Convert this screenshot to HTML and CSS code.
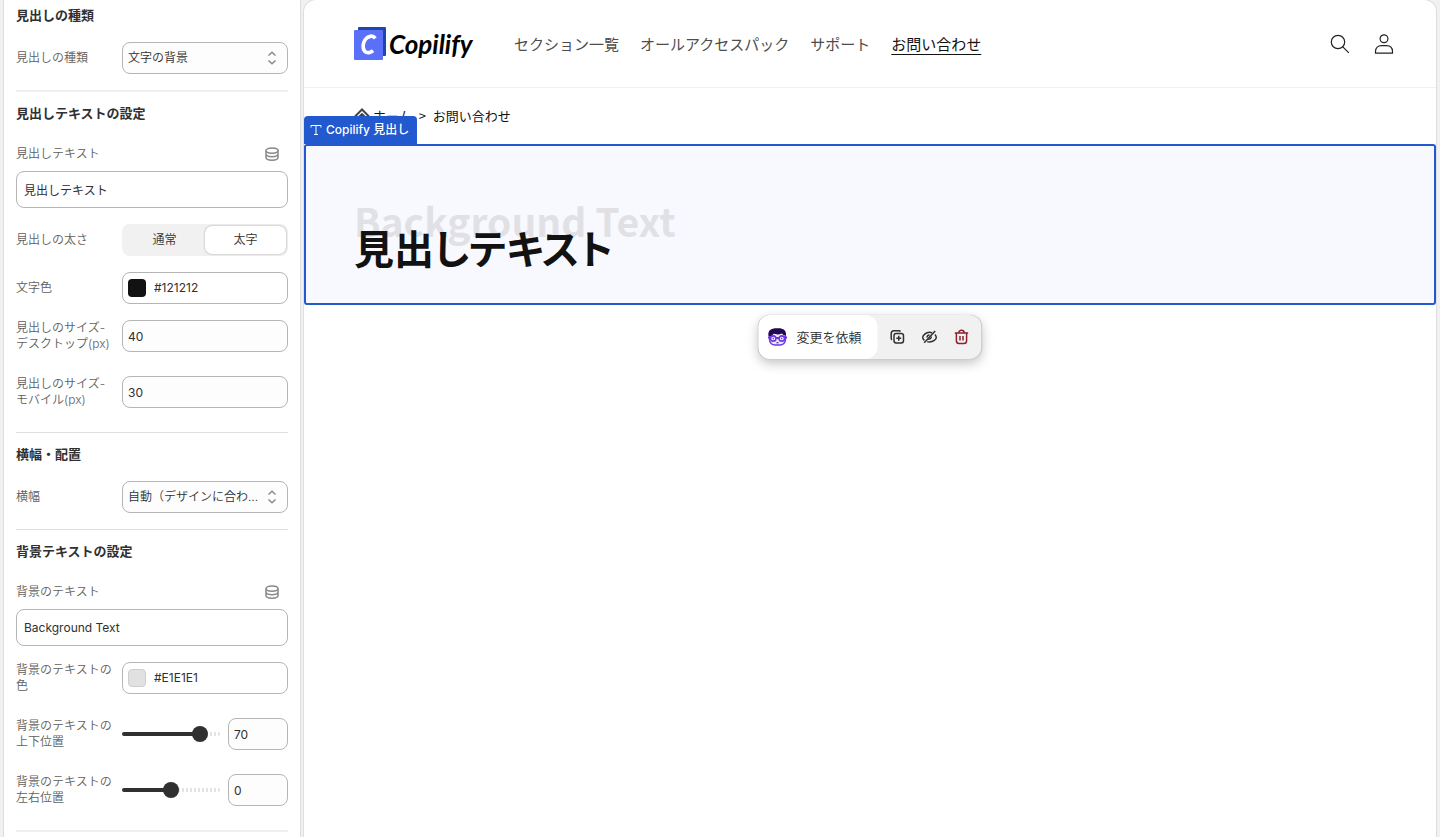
FILE: index.html
```html
<!DOCTYPE html>
<html lang="ja">

<head>
    <meta charset="UTF-8">
    <meta name="viewport" content="width=device-width, initial-scale=1.0">
    <title>Copilify 見出し</title>
    <link rel="stylesheet" href="styles.css">
</head>

<body>

    <aside class="settings">
        <section class="group group-soft">
            <h2>見出しの種類</h2>
            <div class="row">
                <label for="type">見出しの種類</label>
                <div class="select">
                    <select id="type">
                        <option>文字の背景</option>
                    </select>
                    <svg viewBox="0 0 16 16"><path d="M4.500 5.500 8 2.200l3.500 3.300M4.500 10.500 8 13.800l3.500-3.300" /></svg>
                </div>
            </div>
        </section>

        <section class="group">
            <h2>見出しテキストの設定</h2>
            <div class="field">
                <div class="field-head">
                    <label for="heading">見出しテキスト</label>
                    <button type="button" class="source" aria-label="動的ソース">
                        <svg viewBox="0 0 16 16"><ellipse cx="8" cy="4.600" rx="6" ry="2.700" /><path d="M2 4.600v7c0 1.500 2.700 2.700 6 2.700s6-1.200 6-2.700v-7M2 8.100c0 1.500 2.700 2.700 6 2.700s6-1.200 6-2.700" /></svg>
                    </button>
                </div>
                <input class="text" id="heading" type="text" value="見出しテキスト">
            </div>
            <div class="row">
                <span class="name" id="weight">見出しの太さ</span>
                <div class="segment" role="radiogroup" aria-labelledby="weight">
                    <label><input type="radio" name="weight"><span>通常</span></label>
                    <label><input type="radio" name="weight" checked><span>太字</span></label>
                </div>
            </div>
            <div class="row">
                <label for="color">文字色</label>
                <div class="color">
                    <span class="swatch swatch-dark"></span>
                    <input id="color" type="text" value="#121212">
                </div>
            </div>
            <div class="row row-tall">
                <label for="size-pc">見出しのサイズ-<br>デスクトップ(px)</label>
                <input class="number" id="size-pc" type="number" value="40">
            </div>
            <div class="row row-tall">
                <label for="size-sp">見出しのサイズ-<br>モバイル(px)</label>
                <input class="number" id="size-sp" type="number" value="30">
            </div>
        </section>

        <section class="group">
            <h2>横幅・配置</h2>
            <div class="row">
                <label for="width">横幅</label>
                <div class="select">
                    <select id="width">
                        <option>自動（デザインに合わせる）</option>
                    </select>
                    <svg viewBox="0 0 16 16"><path d="M4.500 5.500 8 2.200l3.500 3.300M4.500 10.500 8 13.800l3.500-3.300" /></svg>
                </div>
            </div>
        </section>

        <section class="group group-soft">
            <h2>背景テキストの設定</h2>
            <div class="field">
                <div class="field-head">
                    <label for="bg-text">背景のテキスト</label>
                    <button type="button" class="source" aria-label="動的ソース">
                        <svg viewBox="0 0 16 16"><ellipse cx="8" cy="4.600" rx="6" ry="2.700" /><path d="M2 4.600v7c0 1.500 2.700 2.700 6 2.700s6-1.200 6-2.700v-7M2 8.100c0 1.500 2.700 2.700 6 2.700s6-1.200 6-2.700" /></svg>
                    </button>
                </div>
                <input class="text" id="bg-text" type="text" value="Background Text">
            </div>
            <div class="row row-tall">
                <label for="bg-color">背景のテキストの<br>色</label>
                <div class="color">
                    <span class="swatch swatch-light"></span>
                    <input id="bg-color" type="text" value="#E1E1E1">
                </div>
            </div>
            <div class="row row-tall">
                <label for="bg-y">背景のテキストの<br>上下位置</label>
                <div class="slider">
                    <input id="bg-y" type="range" min="-100" max="100" value="70" style="--fill: 79%">
                    <input class="number" type="number" value="70" aria-label="上下位置">
                </div>
            </div>
            <div class="row row-tall">
                <label for="bg-x">背景のテキストの<br>左右位置</label>
                <div class="slider">
                    <input id="bg-x" type="range" min="-100" max="100" value="0" style="--fill: 50%">
                    <input class="number" type="number" value="0" aria-label="左右位置">
                </div>
            </div>
        </section>
    </aside>

    <main class="preview">
        <header class="header">
            <a class="logo" href="#">
                <svg viewBox="0 0 33 33"><rect x="4" width="28" height="29" rx="1" fill="#1d48ab" /><rect y="3" width="29" height="30" rx="1" fill="#5b70f8" /><path d="M21.300 11.300c-1.300-1.700-3-2.300-5-2-4 .6-7 4.700-7.200 9.700-.1 4.700 2.500 7.100 6 6.600 1.600-.2 2.900-.9 4-1.900" fill="none" stroke="#fff" stroke-width="3.700" /></svg>
                <span>Copilify</span>
            </a>
            <nav class="nav">
                <a href="#">セクション一覧</a>
                <a href="#">オールアクセスパック</a>
                <a href="#">サポート</a>
                <a href="#" class="active">お問い合わせ</a>
            </nav>
            <div class="tools">
                <button type="button" aria-label="検索">
                    <svg viewBox="0 0 20 20"><circle cx="8" cy="8" r="6.700" /><path d="m12.800 12.800 6 6" /></svg>
                </button>
                <button type="button" aria-label="アカウント">
                    <svg viewBox="0 0 20 20"><circle cx="10" cy="4.800" r="3.900" /><path d="M1.500 19.200v-1.700c0-3.700 2.500-5.900 6-5.900h5c3.500 0 6 2.200 6 5.900v1.700z" /></svg>
                </button>
            </div>
        </header>

        <div class="crumbs">
            <a href="#">
                <svg viewBox="0 0 16 16"><path d="M1 8.500 8 1.500l7 7" fill="none" stroke="#444" stroke-width="2" /><path d="M3.500 9 8 4.700 12.500 9v6h-9z" fill="#444" /></svg>
                ホーム
            </a>
            <span class="sep">&gt;</span>
            <span>お問い合わせ</span>
        </div>

        <section class="block">
            <div class="tag">
                <svg viewBox="0 0 12 12"><path d="M1 3.500V1.500h10v2M6 1.500v9M4 10.500h4" /></svg>
                Copilify 見出し
            </div>
            <div class="title">
                <p class="title-back">Background Text</p>
                <h1>見出しテキスト</h1>
            </div>
            <div class="actions">
                <button type="button" class="ask">
                    <svg viewBox="0 0 20 20"><rect x="2" y="4" width="16" height="14" rx="5.500" fill="#efe7ff" stroke="#6d35ea" stroke-width="1.400" /><path d="M1 9C0 3 4 1 10 1.200c6-.2 9 2 8.500 7.300L16 8l-1.500-1.500C11 8 8 7.500 6.500 6.500L4 9z" fill="#23074f" /><path d="M.5 10.500h3M16.500 10.500h3M8.500 11h3" stroke="#6d35ea" stroke-width="2" /><circle cx="5.700" cy="11.500" r="2.700" fill="#fff" stroke="#6d35ea" stroke-width="1.700" /><circle cx="14.300" cy="11.500" r="2.700" fill="#fff" stroke="#6d35ea" stroke-width="1.700" /><path d="M5.700 10.700v1.600M14.300 10.700v1.600M9 15.800h2" stroke="#23074f" /></svg>
                    変更を依頼
                </button>
                <button type="button" class="act" aria-label="複製">
                    <svg viewBox="0 0 16 16"><rect x="4.500" y="4.500" width="9.500" height="9.500" rx="2.200" /><path d="M2.500 11C1.900 10.600 1.700 10 1.700 9.300V4.500c0-1.600 1.200-2.800 2.800-2.800h4.800c.7 0 1.300.2 1.700.8M9.250 6.800v4.900M6.800 9.250h4.900" /></svg>
                </button>
                <button type="button" class="act" aria-label="非表示">
                    <svg viewBox="0 0 16 16"><path d="M13.700 2 2.700 13.800M10.500 3.800C9.700 3.400 8.900 3.200 8 3.200 4.300 3.200 1.200 6.600 1.200 8.500c0 .9.700 2 1.700 2.900M13.400 5.500c.9.900 1.400 2 1.400 2.900 0 1.900-3.100 4.600-6.800 4.600-.8 0-1.600-.1-2.300-.4" /><path d="M6 11c2.500.6 4.700-1.200 4.600-4z" fill="currentColor" stroke="none" /><path d="M5.500 8.500C5.500 7 6.600 6 8 5.900" /></svg>
                </button>
                <button type="button" class="act act-delete" aria-label="削除">
                    <svg viewBox="0 0 16 16"><path d="M1.300 4h13.400M5.300 4c0-1.700 1-2.700 2.700-2.700S10.700 2.300 10.700 4M2.900 4.200v7.500c0 1.800.9 2.800 2.700 2.800h4.800c1.800 0 2.700-1 2.700-2.800V4.200M6.500 7v4.500M9.500 7v4.500" /></svg>
                </button>
            </div>
        </section>
    </main>

</body>

</html>
```
FILE: styles.css
```css
* {
    box-sizing: border-box;
}

body {
    margin: 0;
    height: 100vh;
    padding: 0 4px;
    display: flex;
    gap: 4px;
    overflow: hidden;
    background: #f1f1f1;
    color: #303030;
    font-family: Inter, "Noto Sans CJK JP", sans-serif;
    font-size: 12px;
    line-height: 16px;
}

h1,
h2,
p {
    margin: 0;
}

button,
input,
select {
    font: inherit;
    color: inherit;
    margin: 0;
}

button {
    padding: 0;
    border: none;
    background: none;
}

a {
    color: inherit;
    text-decoration: none;
}

svg {
    display: block;
    flex: none;
}

/* sidebar */
.settings {
    flex: none;
    width: 296px;
    padding: 2px 12px 0;
    background: #fff;
    box-shadow: 0 0 0 1px #dedede;
    overflow: hidden;
}

.group {
    padding-bottom: 8px;
    margin-bottom: 8px;
    border-bottom: 1px solid #dedede;
}

.group-soft {
    border-bottom: 2px solid #efefef;
}

.group h2 {
    margin-bottom: 6px;
    font-size: 13px;
    line-height: 26px;
    font-weight: 600;
}

.row {
    display: grid;
    grid-template-columns: 98px 1fr;
    column-gap: 8px;
    align-items: center;
    padding: 8px 0;
}

.row-tall {
    padding-bottom: 16px;
}

.row > label,
.name,
.field-head {
    color: #616161;
}

.row label,
.name,
.field-head,
.select select,
.ask {
    font-weight: 350;
}

.row > label {
    white-space: nowrap;
}

.field {
    padding: 8px 0;
}

.field-head {
    display: flex;
    align-items: center;
    justify-content: space-between;
    height: 27px;
    margin-bottom: 4px;
    padding-right: 8px;
}

.source svg {
    width: 16px;
    height: 16px;
    fill: none;
    stroke: #8a8a8a;
    stroke-width: 1.5;
}

.text,
.number,
.color,
.select select {
    width: 100%;
    min-width: 0;
    height: 32px;
    padding: 0 5px;
    border: 1px solid #b5b5b5;
    border-radius: 8px;
    background: #fdfdfd;
}

.text {
    display: block;
    height: 37px;
    padding: 0 7px;
    background: #fff;
}

.number {
    appearance: textfield;
}

.number::-webkit-inner-spin-button {
    display: none;
}

.select {
    position: relative;
}

.select select {
    display: block;
    appearance: none;
    padding-right: 24px;
    text-overflow: ellipsis;
}

.select svg {
    position: absolute;
    top: 8px;
    right: 8px;
    width: 16px;
    height: 16px;
    fill: none;
    stroke: #8a8a8a;
    stroke-width: 1.5;
    pointer-events: none;
}

.segment {
    display: grid;
    grid-template-columns: 1fr 1fr;
    height: 32px;
    padding: 2px;
    border-radius: 8px;
    background: #f1f1f1;
}

.segment input {
    position: absolute;
    opacity: 0;
}

.segment span {
    display: block;
    height: 28px;
    line-height: 28px;
    border-radius: 7px;
    text-align: center;
}

.segment input:checked + span {
    background: #fff;
    box-shadow: 0 0 2px #999;
}

.color {
    display: flex;
    align-items: center;
    gap: 8px;
    background: #fff;
}

.color input {
    width: 100%;
    min-width: 0;
    padding: 0;
    border: none;
    background: none;
}

.swatch {
    flex: none;
    width: 18px;
    height: 18px;
    border-radius: 4px;
}

.swatch-dark {
    background: #121212;
}

.swatch-light {
    background: #e1e1e1;
    border: 1px solid #cecece;
}

.slider {
    display: grid;
    grid-template-columns: 1fr 60px;
    gap: 8px;
    align-items: center;
}

.slider input[type="range"] {
    width: 100%;
    min-width: 0;
    height: 16px;
    appearance: none;
    background: none;
}

.slider input[type="range"]::-webkit-slider-runnable-track {
    height: 4px;
    border-radius: 2px;
    background:
        linear-gradient(to right, #303030 var(--fill), transparent var(--fill)),
        repeating-linear-gradient(to right, #e3e3e3 0 2px, #fff 2px 4px);
}

.slider input[type="range"]::-webkit-slider-thumb {
    appearance: none;
    width: 16px;
    height: 16px;
    margin-top: -6px;
    border-radius: 50%;
    background: #303030;
}

/* store preview */
.preview {
    flex: 1;
    min-width: 0;
    border-radius: 12px 12px 0 0;
    background: #fff;
    box-shadow: 0 0 0 1px #dedede;
    font-family: "Noto Sans CJK JP", sans-serif;
    color: #121212;
}

.header {
    display: flex;
    align-items: center;
    height: 88px;
    padding: 0 42px 0 50px;
    border-bottom: 1px solid #f0f0f0;
}

.logo {
    display: flex;
    align-items: center;
    gap: 2px;
    width: 120px;
    margin-right: 40px;
    color: #000;
    font-family: Lato, sans-serif;
    font-size: 26px;
    line-height: 32px;
    font-weight: 700;
    font-style: italic;
}

.logo svg {
    width: 33px;
    height: 33px;
}

.nav {
    display: flex;
    gap: 21px;
    flex: 1;
    color: #4d4d4d;
    font-size: 15px;
    line-height: 20px;
    white-space: nowrap;
}

.nav .active {
    color: #121212;
    text-decoration: underline;
    text-underline-offset: 4px;
}

.tools {
    display: flex;
    gap: 24px;
}

.tools svg {
    width: 20px;
    height: 20px;
    fill: none;
    stroke: #222;
    stroke-width: 1.2;
}

.crumbs {
    display: flex;
    align-items: center;
    gap: 7px;
    height: 56px;
    padding: 0 50px;
    font-size: 13px;
    line-height: 20px;
}

.crumbs a {
    display: flex;
    align-items: center;
    gap: 3px;
}

.crumbs svg {
    width: 16px;
    height: 16px;
}

.block {
    position: relative;
    padding: 46px 48px 28px;
    border: 2px solid #2359cf;
    border-radius: 3px;
    background: #f8f9fe;
}

.tag {
    position: absolute;
    left: -2px;
    bottom: calc(100% + 2px);
    display: flex;
    align-items: center;
    gap: 4px;
    height: 28px;
    padding: 0 8px 0 6px;
    border-radius: 4px 4px 0 0;
    background: #2359cf;
    color: #fff;
    font-family: Inter, "Noto Sans CJK JP", sans-serif;
    font-weight: 500;
    white-space: nowrap;
}

.tag svg {
    width: 12px;
    height: 12px;
    fill: none;
    stroke: #fff;
}

.title {
    position: relative;
    padding-top: 27px;
    font-size: 40px;
    line-height: 56px;
    font-weight: 700;
    font-feature-settings: "palt";
}

.title-back {
    position: absolute;
    top: 0;
    left: 0;
    color: #e1e1e5;
    font-size: 39px;
    white-space: nowrap;
}

.title h1 {
    position: relative;
    font-size: inherit;
}

.actions {
    position: absolute;
    top: calc(100% + 12px);
    left: 50%;
    transform: translateX(-50%);
    display: flex;
    align-items: center;
    height: 44px;
    padding-right: 4px;
    border-radius: 12px;
    background: #f1f1f1;
    box-shadow: 0 0 1px #aaa, 0 4px 12px rgba(0, 0, 0, 0.25);
    color: #303030;
    font-size: 13px;
}

.ask {
    display: flex;
    align-items: center;
    gap: 9px;
    height: 44px;
    margin-right: 4px;
    padding: 0 16px 0 9px;
    border-radius: 12px;
    background: #fff;
    white-space: nowrap;
}

.ask svg {
    width: 20px;
    height: 20px;
}

.act {
    display: grid;
    place-items: center;
    width: 32px;
    height: 32px;
}

.act svg {
    width: 16px;
    height: 16px;
    fill: none;
    stroke: currentColor;
    stroke-width: 1.5;
}

.act-delete {
    color: #8e1f2d;
}
```
